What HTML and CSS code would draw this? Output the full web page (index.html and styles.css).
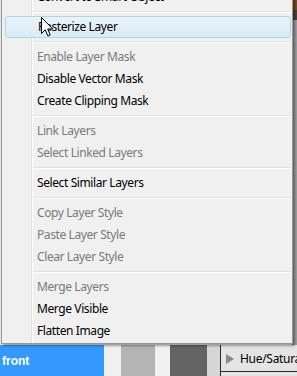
FILE: index.html
```html
<!DOCTYPE html>
<html>
<head>
<meta charset="utf-8">
<link rel="stylesheet" href="styles.css">
</head>
<body>
<div class="app">
  <div class="upper">
    <div class="left-edge"></div>
    <div class="spacer"></div>
    <div class="right-edge">
      <div class="re-top"></div>
      <div class="re-mid"></div>
    </div>
  </div>
  <div class="bottom">
    <div class="cell blue">front</div>
    <div class="cell light w17"></div>
    <div class="cell mid"></div>
    <div class="cell light w15"></div>
    <div class="cell dark"></div>
    <div class="cell grey13"></div>
    <div class="panel">
      <div class="panel-row"><span class="tri"></span><span class="ptext">Hue/Saturation</span></div>
    </div>
  </div>
</div>

<div class="menu">
  <div class="gutter-line"></div>
  <div class="item">Convert to Smart Object</div>
  <div class="sep"></div>
  <div class="item hot">Rasterize Layer</div>
  <div class="sep"></div>
  <div class="item off">Enable Layer Mask</div>
  <div class="item">Disable Vector Mask</div>
  <div class="item">Create Clipping Mask</div>
  <div class="sep"></div>
  <div class="item off">Link Layers</div>
  <div class="item off">Select Linked Layers</div>
  <div class="sep"></div>
  <div class="item">Select Similar Layers</div>
  <div class="sep"></div>
  <div class="item off">Copy Layer Style</div>
  <div class="item off">Paste Layer Style</div>
  <div class="item off">Clear Layer Style</div>
  <div class="sep"></div>
  <div class="item off">Merge Layers</div>
  <div class="item">Merge Visible</div>
  <div class="item">Flatten Image</div>
</div>

<svg class="cursor" width="13" height="21" viewBox="0 0 13 21">
  <path d="M0.5 0.5 L0.5 16.5 L4.3 12.8 L6.9 19 L9.2 18 L6.7 12 L11.8 12 Z" fill="#fff" stroke="#000" stroke-width="1" stroke-linejoin="miter"/>
</svg>
</body>
</html>
```

FILE: styles.css
```css
html, body {
  margin: 0;
  padding: 0;
  width: 297px;
  height: 376px;
  overflow: hidden;
  background: #f0f0f0;
  font-family: "Noto Sans", "Open Sans", sans-serif;
}

.app {
  width: 297px;
  height: 376px;
  display: flex;
  flex-direction: column;
}

.upper {
  flex: 1;
  display: flex;
}

.left-edge {
  width: 2px;
  background: #e4e4e4;
}

.spacer { flex: 1; }

.right-edge {
  width: 4px;
  display: flex;
  flex-direction: column;
  background: #9a9a9a;
  border-left: 1px solid #6e6e6e;
}

.re-top {
  height: 10px;
  background: #7a4a1c;
}

.re-mid {
  height: 10px;
  background: #4a4038;
}

.bottom {
  height: 31px;
  display: flex;
  flex-shrink: 0;
}

.cell {
  height: 100%;
  flex-shrink: 0;
}

.blue {
  width: 104px;
  background: #3399ff;
  color: #fff;
  font-weight: bold;
  font-size: 12px;
  line-height: 33px;
  padding-left: 2px;
  box-sizing: border-box;
  font-family: "Liberation Sans", sans-serif;
}

.light { background: #f0f0f0; }
.w17 { width: 17px; }
.w15 { width: 15px; }
.mid { width: 34px; background: #b4b4b4; }
.dark { width: 37px; background: #646464; }
.grey13 { width: 13px; background: #d6d6d6; }

.panel {
  flex: 1;
  min-width: 0;
  overflow: hidden;
  background: #e4e4e4;
  border-left: 1px solid #2a2a2a;
  display: flex;
  flex-direction: column;
}

.panel-row {
  height: 25px;
  display: flex;
  align-items: center;
  border-bottom: 1px solid #2a2a2a;
  padding-left: 5px;
  margin-top: 1px;
}

.tri {
  width: 0;
  height: 0;
  flex-shrink: 0;
  border-top: 5px solid transparent;
  border-bottom: 5px solid transparent;
  border-left: 8px solid #8a8a8a;
  margin-right: 6px;
}

.ptext {
  font-size: 12px;
  color: #000;
  white-space: nowrap;
  letter-spacing: -0.3px;
}

.menu {
  position: absolute;
  left: 1px;
  top: -15px;
  width: 290px;
  background: #f0f0f0;
  border: 1px solid #979797;
  padding: 0 0 1px 0;
  box-shadow: 2px 2px 2px rgba(0, 0, 0, 0.35);
  font-size: 12px;
  letter-spacing: -0.4px;
}

.gutter-line {
  position: absolute;
  left: 29px;
  top: 0;
  bottom: 0;
  width: 1px;
  background: #e2e3e3;
  border-right: 1px solid #fff;
}

.item {
  position: relative;
  height: 22px;
  line-height: 22px;
  padding-left: 34px;
  margin: 0 1px 0 1px;
  color: #000;
  white-space: nowrap;
  box-sizing: border-box;
}

.item.off { color: #7a7a7a; }

.item.hot {
  margin: 0 1px 0 3px;
  padding-left: 32px;
  border: 1px solid #a8d8eb;
  border-radius: 3px;
  line-height: 20px;
  background: linear-gradient(#eaf3f9, #d9ebf6);
}

.sep {
  position: relative;
  height: 8px;
  box-sizing: border-box;
  padding-top: 3px;
  margin-left: 31px;
  margin-right: 1px;
}

.sep::before {
  content: "";
  display: block;
  height: 1px;
  background: #e0e0e0;
  border-bottom: 1px solid #ffffff;
}

.cursor {
  position: absolute;
  left: 41px;
  top: 17px;
}
```
